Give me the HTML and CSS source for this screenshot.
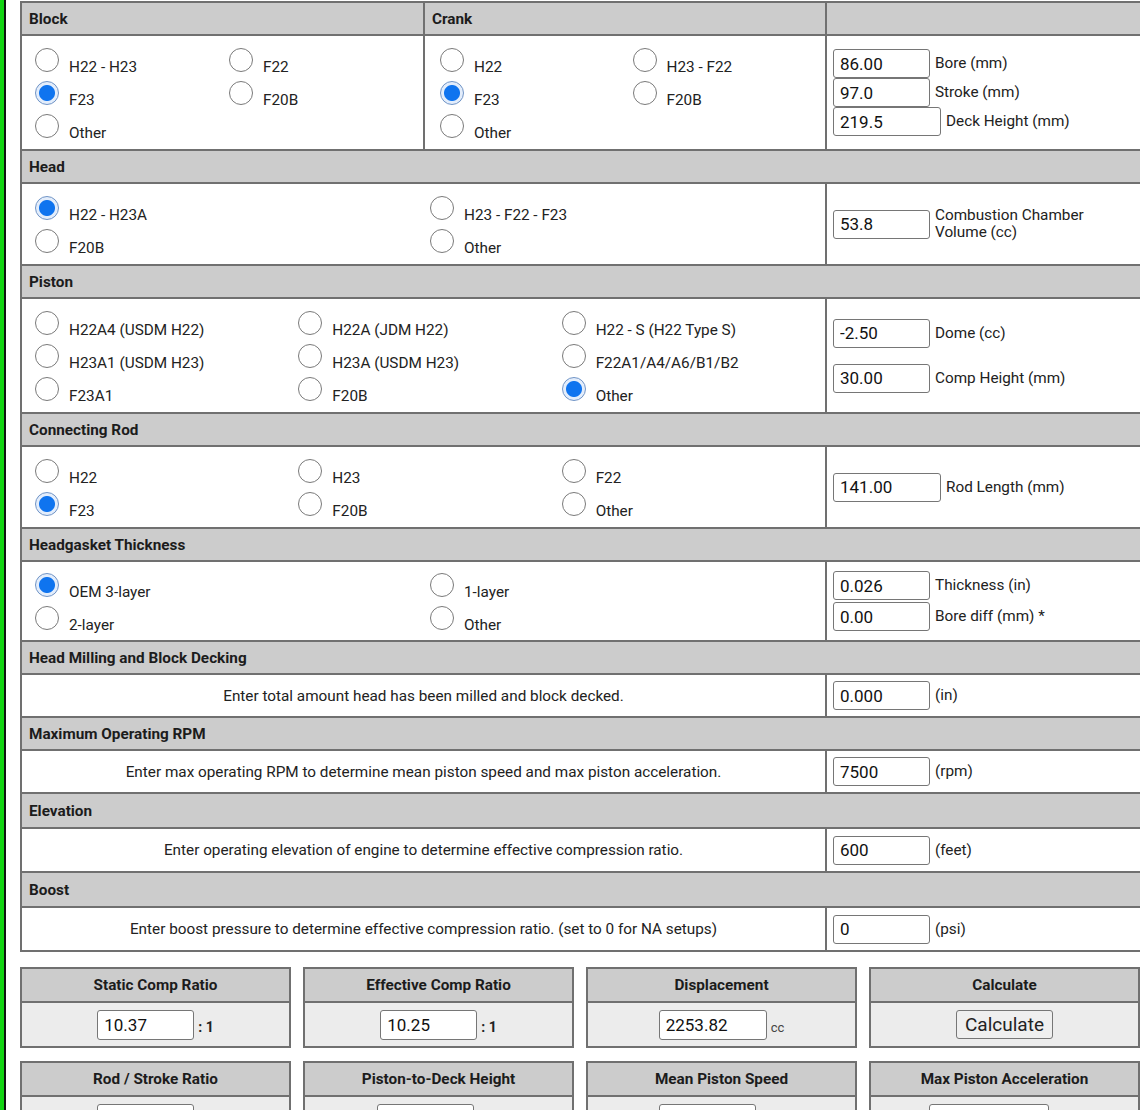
FILE: index.html
```html
<!DOCTYPE html>
<html lang="en">
<head>
<meta charset="UTF-8">
<meta name="viewport" content="width=device-width, initial-scale=1.0">
<title>H / F Series Compression Calculator</title>
<link rel="stylesheet" href="styles.css">
</head>
<body>
<div class="page">
<form class="calc" id="calcForm">

  <!-- Engine setup -->
  <div class="sheet">
    <div class="hd">Block</div>
    <div class="hd">Crank</div>
    <div class="hd"></div>

    <div class="cell opts cols-2">
      <label class="opt"><input type="radio" name="block" value="h22"><span>H22 - H23</span></label>
      <label class="opt"><input type="radio" name="block" value="f22"><span>F22</span></label>
      <label class="opt"><input type="radio" name="block" value="f23" checked><span>F23</span></label>
      <label class="opt"><input type="radio" name="block" value="f20b"><span>F20B</span></label>
      <label class="opt"><input type="radio" name="block" value="other"><span>Other</span></label>
    </div>
    <div class="cell opts cols-2 crank">
      <label class="opt"><input type="radio" name="crank" value="h22"><span>H22</span></label>
      <label class="opt"><input type="radio" name="crank" value="h23"><span>H23 - F22</span></label>
      <label class="opt"><input type="radio" name="crank" value="f23" checked><span>F23</span></label>
      <label class="opt"><input type="radio" name="crank" value="f20b"><span>F20B</span></label>
      <label class="opt"><input type="radio" name="crank" value="other"><span>Other</span></label>
    </div>
    <div class="cell fields">
      <div class="field"><input class="num" type="text" id="bore" value="86.00"><span class="unit">Bore (mm)</span></div>
      <div class="field"><input class="num" type="text" id="stroke" value="97.0"><span class="unit">Stroke (mm)</span></div>
      <div class="field"><input class="num wide" type="text" id="deck" value="219.5"><span class="unit">Deck Height (mm)</span></div>
    </div>

    <!-- Head -->
    <div class="hd wide">Head</div>
    <div class="cell left opts cols-2">
      <label class="opt"><input type="radio" name="head" value="h22" checked><span>H22 - H23A</span></label>
      <label class="opt"><input type="radio" name="head" value="h23"><span>H23 - F22 - F23</span></label>
      <label class="opt"><input type="radio" name="head" value="f20b"><span>F20B</span></label>
      <label class="opt"><input type="radio" name="head" value="other"><span>Other</span></label>
    </div>
    <div class="cell fields">
      <div class="field"><input class="num" type="text" id="chamber" value="53.8"><span class="unit">Combustion Chamber<br>Volume (cc)</span></div>
    </div>

    <!-- Piston -->
    <div class="hd wide">Piston</div>
    <div class="cell left opts cols-3">
      <label class="opt"><input type="radio" name="piston" value="h22a4"><span>H22A4 (USDM H22)</span></label>
      <label class="opt"><input type="radio" name="piston" value="h22a"><span>H22A (JDM H22)</span></label>
      <label class="opt"><input type="radio" name="piston" value="h22s"><span>H22 - S (H22 Type S)</span></label>
      <label class="opt"><input type="radio" name="piston" value="h23a1"><span>H23A1 (USDM H23)</span></label>
      <label class="opt"><input type="radio" name="piston" value="h23a"><span>H23A (USDM H23)</span></label>
      <label class="opt"><input type="radio" name="piston" value="f22"><span>F22A1/A4/A6/B1/B2</span></label>
      <label class="opt"><input type="radio" name="piston" value="f23a1"><span>F23A1</span></label>
      <label class="opt"><input type="radio" name="piston" value="f20b"><span>F20B</span></label>
      <label class="opt"><input type="radio" name="piston" value="other" checked><span>Other</span></label>
    </div>
    <div class="cell fields loose">
      <div class="field"><input class="num" type="text" id="dome" value="-2.50"><span class="unit">Dome (cc)</span></div>
      <div class="field"><input class="num" type="text" id="compHeight" value="30.00"><span class="unit">Comp Height (mm)</span></div>
    </div>

    <!-- Connecting rod -->
    <div class="hd wide">Connecting Rod</div>
    <div class="cell left opts cols-3">
      <label class="opt"><input type="radio" name="rod" value="h22"><span>H22</span></label>
      <label class="opt"><input type="radio" name="rod" value="h23"><span>H23</span></label>
      <label class="opt"><input type="radio" name="rod" value="f22"><span>F22</span></label>
      <label class="opt"><input type="radio" name="rod" value="f23" checked><span>F23</span></label>
      <label class="opt"><input type="radio" name="rod" value="f20b"><span>F20B</span></label>
      <label class="opt"><input type="radio" name="rod" value="other"><span>Other</span></label>
    </div>
    <div class="cell fields">
      <div class="field"><input class="num wide" type="text" id="rodLength" value="141.00"><span class="unit">Rod Length (mm)</span></div>
    </div>

    <!-- Headgasket -->
    <div class="hd wide">Headgasket Thickness</div>
    <div class="cell left opts cols-2 snug">
      <label class="opt"><input type="radio" name="gasket" value="oem" checked><span>OEM 3-layer</span></label>
      <label class="opt"><input type="radio" name="gasket" value="one"><span>1-layer</span></label>
      <label class="opt"><input type="radio" name="gasket" value="two"><span>2-layer</span></label>
      <label class="opt"><input type="radio" name="gasket" value="other"><span>Other</span></label>
    </div>
    <div class="cell fields pair">
      <div class="field"><input class="num" type="text" id="gasketThk" value="0.026"><span class="unit">Thickness (in)</span></div>
      <div class="field"><input class="num" type="text" id="gasketBore" value="0.00"><span class="unit">Bore diff (mm) *</span></div>
    </div>

    <!-- Single value rows -->
    <div class="hd wide">Head Milling and Block Decking</div>
    <div class="cell left line note">Enter total amount head has been milled and block decked.</div>
    <div class="cell line fields">
      <div class="field"><input class="num" type="text" id="milling" value="0.000"><span class="unit">(in)</span></div>
    </div>

    <div class="hd wide">Maximum Operating RPM</div>
    <div class="cell left line note">Enter max operating RPM to determine mean piston speed and max piston acceleration.</div>
    <div class="cell line fields">
      <div class="field"><input class="num" type="text" id="rpm" value="7500"><span class="unit">(rpm)</span></div>
    </div>

    <div class="hd wide tall">Elevation</div>
    <div class="cell left line roomy note">Enter operating elevation of engine to determine effective compression ratio.</div>
    <div class="cell line roomy fields">
      <div class="field"><input class="num" type="text" id="elevation" value="600"><span class="unit">(feet)</span></div>
    </div>

    <div class="hd wide tall">Boost</div>
    <div class="cell left line roomy note">Enter boost pressure to determine effective compression ratio. (set to 0 for NA setups)</div>
    <div class="cell line roomy fields">
      <div class="field"><input class="num" type="text" id="boost" value="0"><span class="unit">(psi)</span></div>
    </div>
  </div>

  <!-- Results -->
  <div class="results">
    <div class="card">
      <div class="card-hd">Static Comp Ratio</div>
      <div class="card-bd"><input class="num" type="text" id="scr" value="10.37"><b>: 1</b></div>
    </div>
    <div class="card">
      <div class="card-hd">Effective Comp Ratio</div>
      <div class="card-bd"><input class="num" type="text" id="ecr" value="10.25"><b>: 1</b></div>
    </div>
    <div class="card">
      <div class="card-hd">Displacement</div>
      <div class="card-bd"><input class="num wide" type="text" id="disp" value="2253.82"><span class="small">cc</span></div>
    </div>
    <div class="card">
      <div class="card-hd">Calculate</div>
      <div class="card-bd"><button type="submit" id="calcButton">Calculate</button></div>
    </div>

    <div class="card">
      <div class="card-hd">Rod / Stroke Ratio</div>
      <div class="card-bd"><input class="num" type="text" id="rodStroke" value="1.45"><b>: 1</b></div>
    </div>
    <div class="card">
      <div class="card-hd">Piston-to-Deck Height</div>
      <div class="card-bd"><input class="num" type="text" id="p2d" value="0.000"><span class="small">mm</span></div>
    </div>
    <div class="card">
      <div class="card-hd">Mean Piston Speed</div>
      <div class="card-bd"><input class="num" type="text" id="mps" value="4773"><span class="small">fpm</span></div>
    </div>
    <div class="card">
      <div class="card-hd">Max Piston Acceleration</div>
      <div class="card-bd"><input class="num xwide" type="text" id="mpa" value="131918"><span class="small">ft/s<sup>2</sup></span></div>
    </div>
  </div>

</form>
</div>

<script>
document.getElementById("calcForm").addEventListener("submit", function(event) {
  event.preventDefault();
});
</script>
</body>
</html>
```

FILE: styles.css
```css
/* Page frame */
* {
  box-sizing: border-box;
}

html,
body {
  margin: 0;
  overflow: hidden;
}

body {
  font-family: Roboto, "Liberation Sans", Arial, sans-serif;
  font-size: 15.3px;
  color: #222;
  background: #fff;
  border-left: 4px solid #14d414;
}

.page {
  min-height: 100vh;
  border-left: 2px solid #111;
  padding: 1px 0 0 14px;
}

.calc {
  width: 1122px;
}

/* Input table */
.sheet {
  display: grid;
  grid-template-columns: 403px 402px 315px;
  border: 1px solid #707070;
}

.hd {
  height: 33px;
  padding: 0 7px;
  display: flex;
  align-items: center;
  background: #cccccc;
  border: 1px solid #707070;
  font-weight: bold;
  color: #1c1c1c;
}

.hd.wide {
  grid-column: 1 / -1;
}

.hd.tall {
  height: 35px;
}

.cell {
  border: 1px solid #707070;
  background: #fff;
}

.cell.left {
  grid-column: 1 / 3;
}

/* Radio groups */
.opts {
  display: grid;
  grid-auto-rows: 33px;
  padding: 7px 0 7px 13px;
}

.opts.snug {
  padding-top: 6px;
  padding-bottom: 6px;
}

.cols-2 {
  grid-template-columns: 1fr 1fr;
}

.cols-3 {
  grid-template-columns: 1fr 1fr 1fr;
}

.opts.crank {
  padding-left: 15px;
}

.opt {
  display: flex;
  align-items: flex-end;
  gap: 10px;
  padding-bottom: 4px;
}

.opt span {
  line-height: 16px;
  margin-bottom: -3px;
}

.opt input {
  -webkit-appearance: none;
  appearance: none;
  flex: none;
  width: 24px;
  height: 24px;
  margin: 0;
  border: 1.5px solid #7a7a7a;
  border-radius: 50%;
  background: #fff;
}

.opt input:checked {
  border-color: #7094c6;
  background: radial-gradient(circle, #0f74ef 0 7.5px, #e3edfb 8.5px);
}

/* Number fields */
.fields {
  display: flex;
  flex-direction: column;
  justify-content: center;
  padding: 6px;
}

.fields.loose {
  gap: 16px;
}

.fields.pair {
  gap: 2px;
}

.field {
  display: flex;
  align-items: center;
  gap: 5px;
}

.unit {
  line-height: 17px;
}

.num {
  width: 97px;
  height: 29px;
  padding: 0 6px;
  border: 1px solid #767676;
  border-radius: 3px;
  background: #fff;
  font-family: inherit;
  font-size: 17px;
  color: #111;
}

.num.wide {
  width: 108px;
}

.num.xwide {
  width: 120px;
}

.line {
  height: 43px;
}

.line.roomy {
  height: 44px;
}

.note {
  display: flex;
  align-items: center;
  justify-content: center;
}

/* Result cards */
.results {
  width: 1120px;
  display: grid;
  grid-template-columns: repeat(4, 1fr);
  gap: 13px 12px;
  margin-top: 15px;
}

.card {
  border: 1px solid #707070;
  background: #ececec;
}

.card-hd {
  height: 34px;
  display: flex;
  align-items: center;
  justify-content: center;
  background: #cccccc;
  border: 1px solid #707070;
  font-weight: bold;
  color: #1c1c1c;
}

.card-bd {
  height: 45px;
  display: flex;
  align-items: center;
  justify-content: center;
  gap: 4px;
  border: 1px solid #707070;
}

.card-bd .num {
  height: 30px;
}

.card-bd b {
  font-size: 14px;
  padding-top: 4px;
}

.small {
  font-size: 13px;
  color: #444;
  padding-top: 5px;
}

#calcButton {
  height: 29px;
  padding: 0 8px;
  border: 1px solid #767676;
  border-radius: 3px;
  background: #efefef;
  font-family: inherit;
  font-size: 19px;
  color: #222;
  cursor: pointer;
}
```
